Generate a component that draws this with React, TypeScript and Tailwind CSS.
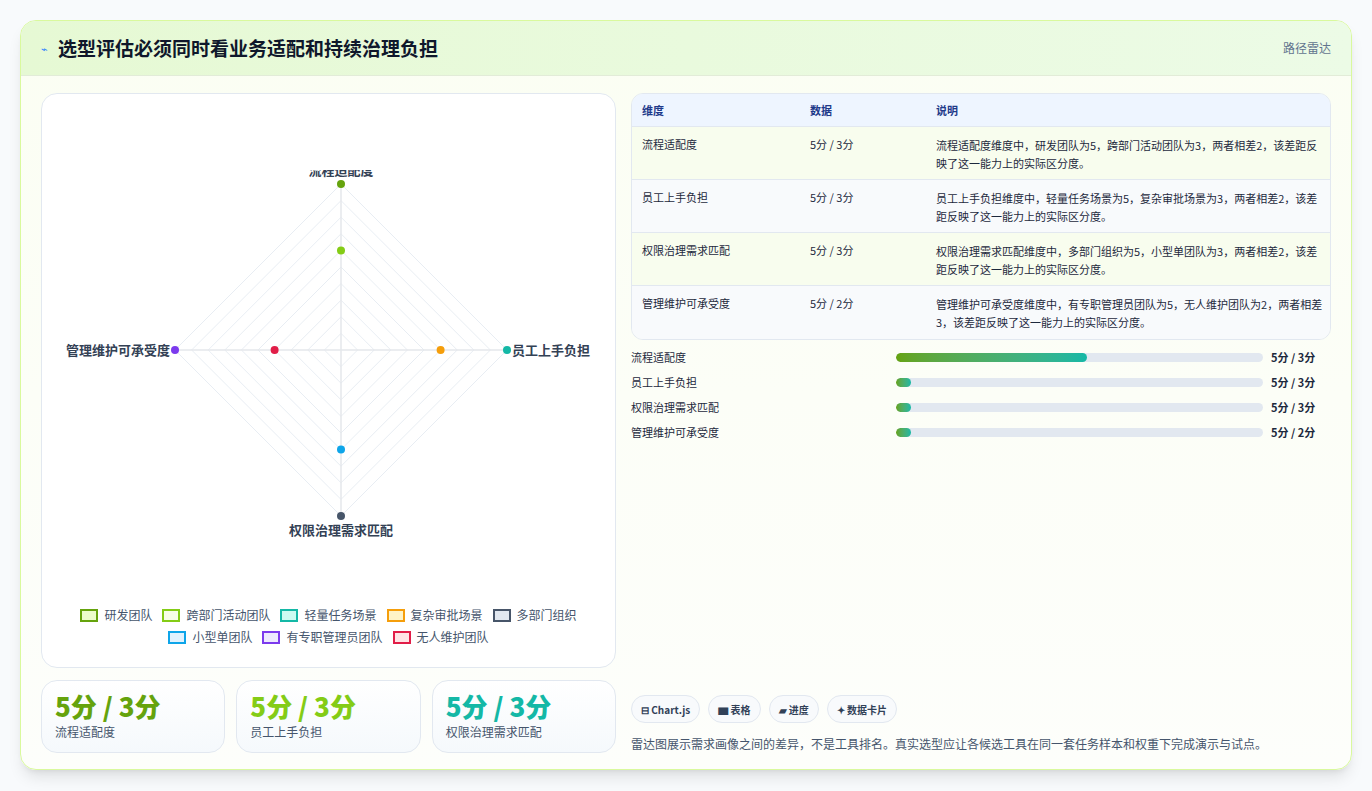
import React from "react";

const rows = [
  { name: "流程适配度", data: "5分 / 3分", desc: "流程适配度维度中，研发团队为5，跨部门活动团队为3，两者相差2，该差距反映了这一能力上的实际区分度。" },
  { name: "员工上手负担", data: "5分 / 3分", desc: "员工上手负担维度中，轻量任务场景为5，复杂审批场景为3，两者相差2，该差距反映了这一能力上的实际区分度。" },
  { name: "权限治理需求匹配", data: "5分 / 3分", desc: "权限治理需求匹配维度中，多部门组织为5，小型单团队为3，两者相差2，该差距反映了这一能力上的实际区分度。" },
  { name: "管理维护可承受度", data: "5分 / 2分", desc: "管理维护可承受度维度中，有专职管理员团队为5，无人维护团队为2，两者相差3，该差距反映了这一能力上的实际区分度。" },
];

const bars = [
  { name: "流程适配度", pct: 52, val: "5分 / 3分" },
  { name: "员工上手负担", pct: 4, val: "5分 / 3分" },
  { name: "权限治理需求匹配", pct: 4, val: "5分 / 3分" },
  { name: "管理维护可承受度", pct: 4, val: "5分 / 2分" },
];

const legend1 = [
  { n: "研发团队", b: "#65a30d", f: "#ecfccb" },
  { n: "跨部门活动团队", b: "#84cc16", f: "#f7fee7" },
  { n: "轻量任务场景", b: "#14b8a6", f: "#ccfbf1" },
  { n: "复杂审批场景", b: "#f59e0b", f: "#fef3c7" },
  { n: "多部门组织", b: "#475569", f: "#e2e8f0" },
];
const legend2 = [
  { n: "小型单团队", b: "#0ea5e9", f: "#e0f2fe" },
  { n: "有专职管理员团队", b: "#7c3aed", f: "#ede9fe" },
  { n: "无人维护团队", b: "#e11d48", f: "#ffe4e6" },
];

function Radar() {
  const cx = 299, cy = 180, r = 166;
  const rings = Array.from({ length: 10 }, (_, i) => (r * (i + 1)) / 10);
  const dots = [
    { x: cx, y: cy - r, c: "#65a30d" },
    { x: cx, y: cy - r * 0.6, c: "#84cc16" },
    { x: cx + r, y: cy, c: "#14b8a6" },
    { x: cx + r * 0.6, y: cy, c: "#f59e0b" },
    { x: cx, y: cy + r, c: "#475569" },
    { x: cx, y: cy + r * 0.6, c: "#0ea5e9" },
    { x: cx - r, y: cy, c: "#7c3aed" },
    { x: cx - r * 0.4, y: cy, c: "#e11d48" },
  ];
  return (
    <svg width="574" height="380" viewBox="0 0 574 380" className="block">
      {rings.map((d) => (
        <polygon key={d} points={`${cx},${cy - d} ${cx + d},${cy} ${cx},${cy + d} ${cx - d},${cy}`} fill="none" stroke="#e2e8f0" strokeWidth="0.8" />
      ))}
      <line x1={cx} y1={cy - r} x2={cx} y2={cy + r} stroke="#e5e7eb" strokeWidth="1.5" />
      <line x1={cx - r} y1={cy} x2={cx + r} y2={cy} stroke="#e5e7eb" strokeWidth="1.5" />
      {dots.map((d, i) => (
        <circle key={i} cx={d.x} cy={d.y} r="4" fill={d.c} />
      ))}
      <g fontSize="13" fill="#334155" fontWeight="600" fontFamily="'Noto Sans CJK SC', sans-serif">
        <text x={cx} y={cy - r - 9} textAnchor="middle">流程适配度</text>
        <text x={cx + r + 5} y={cy + 5}>员工上手负担</text>
        <text x={cx} y={cy + r + 19} textAnchor="middle">权限治理需求匹配</text>
        <text x={cx - r - 5} y={cy + 5} textAnchor="end">管理维护可承受度</text>
      </g>
    </svg>
  );
}

function Legend({ items }: { items: { n: string; b: string; f: string }[] }) {
  return (
    <div className="flex justify-center gap-2.5">
      {items.map((l) => (
        <div key={l.n} className="flex items-center gap-1.5 text-[12px] text-slate-600">
          <span className="inline-block w-[18px] h-[13px] border-2" style={{ borderColor: l.b, background: l.f }} />
          {l.n}
        </div>
      ))}
    </div>
  );
}

export default function App() {
  return (
    <div className="w-[1372px] h-[791px] bg-[#f8fafc] p-5" style={{ fontFamily: "'Noto Sans CJK SC', 'Noto Sans', sans-serif" }}>
      <div className="h-[750px] rounded-2xl border border-[#d9f99d] bg-gradient-to-b from-[#fbfef3] to-[#fdfefb] shadow-lg flex flex-col overflow-hidden">
        <div className="h-[55px] shrink-0 flex items-center justify-between px-5 bg-gradient-to-r from-[#e6f9d4] to-[#ecfbe6] border-b border-[#e2ecd8]">
          <div className="flex items-center gap-2.5">
            <span className="text-[11px] text-blue-500">⌁</span>
            <h1 className="text-[19px] font-bold text-slate-900">选型评估必须同时看业务适配和持续治理负担</h1>
          </div>
          <span className="text-[12px] text-slate-500">路径雷达</span>
        </div>
        <div className="flex-1 flex gap-[15px] px-5 pt-[17px] pb-[18px]">
          <div className="w-[575px] flex flex-col gap-3">
            <div className="h-[575px] rounded-2xl border border-slate-200 bg-white flex flex-col items-center pt-[76px]">
              <Radar />
              <div className="mt-[56px] flex flex-col gap-1">
                <Legend items={legend1} />
                <Legend items={legend2} />
              </div>
            </div>
            <div className="grid grid-cols-3 gap-[11px]">
              {[
                { c: "text-[#65a30d]", l: "流程适配度" },
                { c: "text-[#84cc16]", l: "员工上手负担" },
                { c: "text-[#14b8a6]", l: "权限治理需求匹配" },
              ].map((s) => (
                <div key={s.l} className="h-[73px] rounded-2xl border border-slate-200 bg-gradient-to-b from-white to-[#f5f9fc] px-[13px] pt-[8px]">
                  <div className={`text-[26px] font-extrabold leading-[34px] ${s.c}`}>5分 / 3分</div>
                  <div className="text-[12px] text-slate-600">{s.l}</div>
                </div>
              ))}
            </div>
          </div>
          <div className="flex-1 flex flex-col">
            <div className="rounded-xl border border-slate-200 overflow-hidden">
              <div className="grid grid-cols-[168px_126px_1fr] h-[33px] items-center bg-[#eef5ff] border-b border-slate-200 text-[11px] font-bold text-[#1e3a8a] px-[10px]">
                <span>维度</span><span>数据</span><span>说明</span>
              </div>
              {rows.map((r, i) => (
                <div key={r.name} className={`grid grid-cols-[168px_126px_1fr] h-[53px] pt-[9px] text-[11px] text-slate-800 pl-[10px] pr-[6px] ${i < 3 ? "border-b border-slate-200" : ""} ${i % 2 === 0 ? "bg-[#f8fdee]" : "bg-[#f8fafc]"}`}>
                  <span>{r.name}</span><span>{r.data}</span><span className="leading-[18px]">{r.desc}</span>
                </div>
              ))}
            </div>
            <div className="mt-[9px] flex flex-col gap-[9px]">
              {bars.map((b) => (
                <div key={b.name} className="flex items-center h-[16px] text-[11px]">
                  <span className="w-[265px] text-slate-800">{b.name}</span>
                  <div className="w-[367px] h-[9px] rounded-full bg-[#e2e8f0] overflow-hidden">
                    <div className="h-full rounded-full bg-gradient-to-r from-[#65a30d] to-[#14b8a6]" style={{ width: `${b.pct}%` }} />
                  </div>
                  <span className="ml-2 font-bold text-slate-800">{b.val}</span>
                </div>
              ))}
            </div>
            <div className="mt-auto flex gap-2 text-[10px] font-bold text-slate-700">
              {["⊟ Chart.js", "▆ 表格", "▰ 进度", "✦ 数据卡片"].map((t) => (
                <span key={t} className="h-[28px] px-[9px] flex items-center rounded-full border border-slate-200 bg-[#f8fafc]">{t}</span>
              ))}
            </div>
            <p className="mt-[12px] text-[12px] text-slate-600">雷达图展示需求画像之间的差异，不是工具排名。真实选型应让各候选工具在同一套任务样本和权重下完成演示与试点。</p>
          </div>
        </div>
      </div>
    </div>
  );
}
